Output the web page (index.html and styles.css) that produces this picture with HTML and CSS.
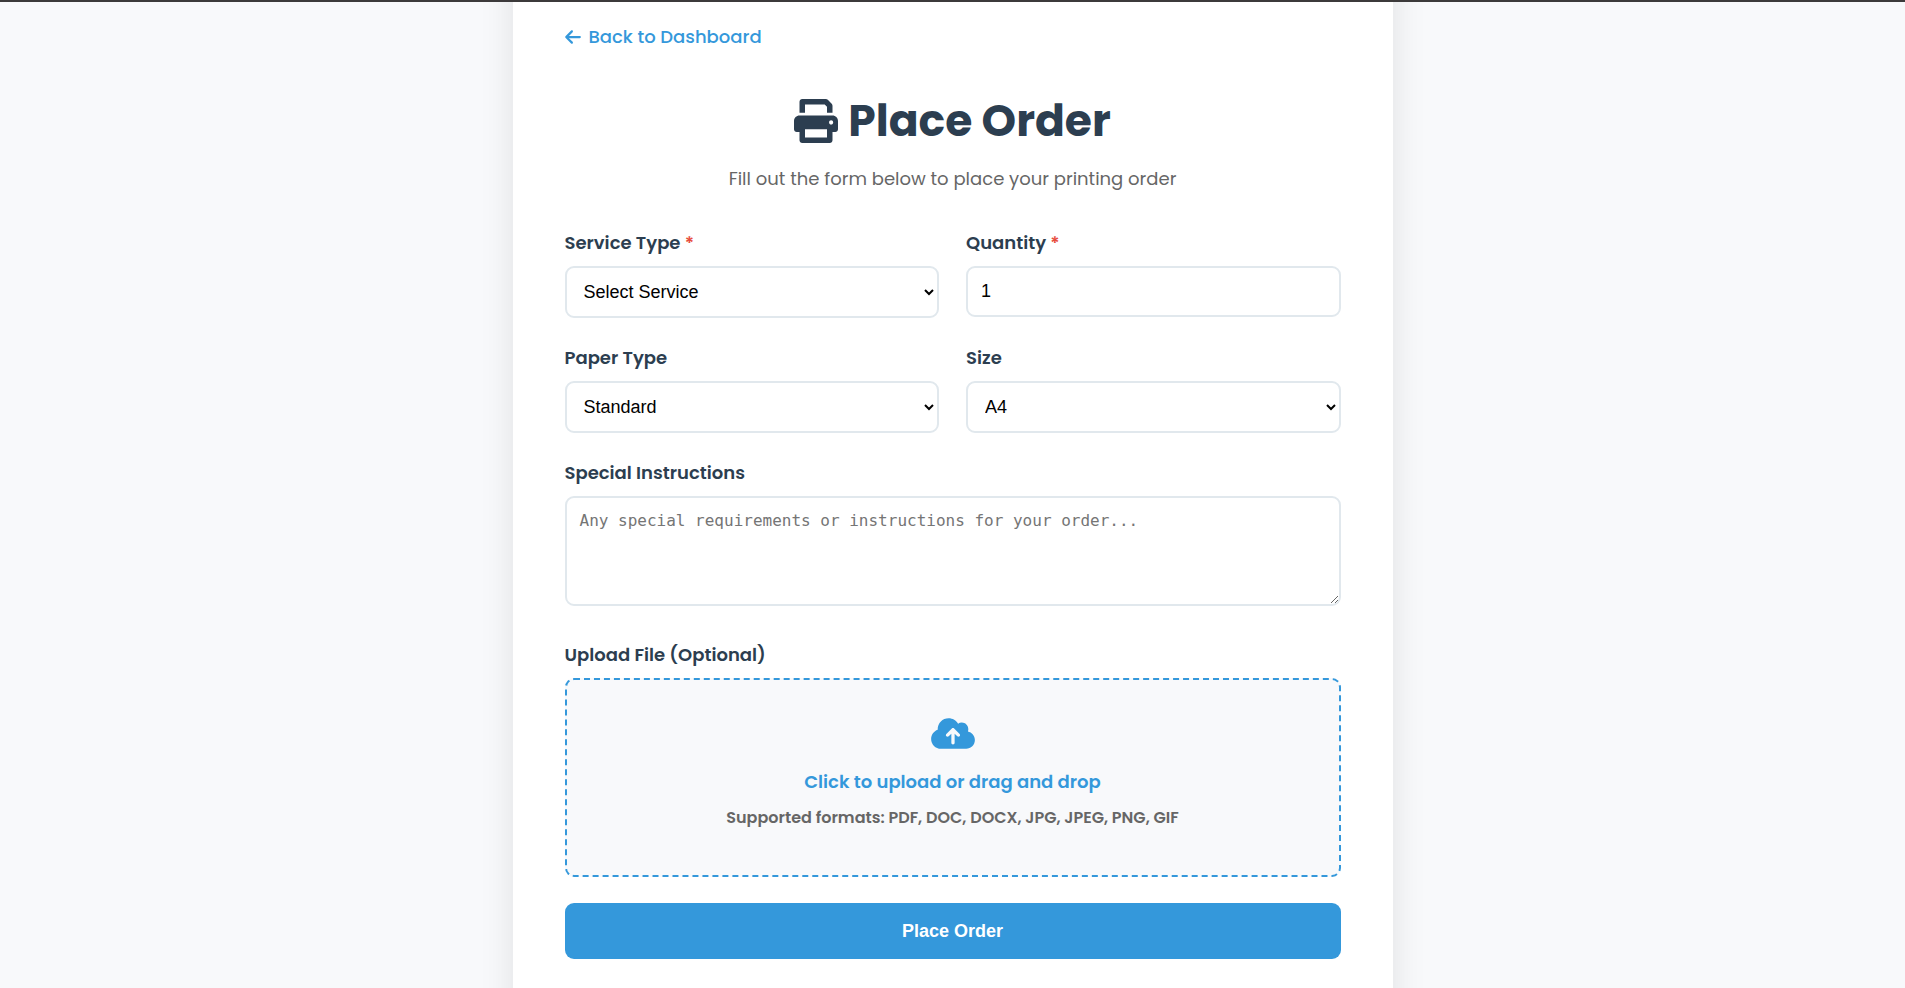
FILE: index.html
```html
<!DOCTYPE html>
<html lang="en">
<head>
    <meta charset="UTF-8">
    <meta name="viewport" content="width=device-width, initial-scale=1.0">
    <title>Place Order</title>
    <link rel="stylesheet" href="styles.css">
</head>
<body>

<main class="container">
    <a href="#" class="back-link">
        <svg class="icon-back" viewBox="0 0 448 512" aria-hidden="true"><path d="M9.4 233.4c-12.5 12.5-12.5 32.8 0 45.3l160 160c12.5 12.5 32.8 12.5 45.3 0s12.5-32.8 0-45.3L109.2 288 416 288c17.7 0 32-14.3 32-32s-14.3-32-32-32l-306.7 0L214.6 118.6c12.5-12.5 12.5-32.8 0-45.3s-32.8-12.5-45.3 0l-160 160z"/></svg>
        Back to Dashboard
    </a>

    <div class="header">
        <h1>
            <svg class="icon-print" viewBox="0 0 512 512" aria-hidden="true"><path d="M448 192H64C28.65 192 0 220.7 0 256v96c0 17.67 14.33 32 32 32h32v96c0 17.67 14.33 32 32 32h320c17.67 0 32-14.33 32-32v-96h32c17.67 0 32-14.33 32-32V256C512 220.7 483.3 192 448 192zM384 448H128v-96h256V448zM432 296c-13.25 0-24-10.75-24-24c0-13.27 10.75-24 24-24S456 258.7 456 272C456 285.3 445.3 296 432 296zM128 64h229.5L384 90.51V160h64V77.25c0-8.484-3.375-16.62-9.375-22.62l-45.25-45.25C387.4 3.371 379.2 0 370.8 0H96C78.34 0 64 14.33 64 32v128h64V64z"/></svg>
            Place Order
        </h1>
        <p>Fill out the form below to place your printing order</p>
    </div>

    <form id="orderForm" method="post" enctype="multipart/form-data">
        <div class="form-row">
            <div class="form-group">
                <label for="service">Service Type <span class="required">*</span></label>
                <select id="service" name="service" required>
                    <option value="">Select Service</option>
                </select>
            </div>
            <div class="form-group">
                <label for="quantity">Quantity <span class="required">*</span></label>
                <input type="number" id="quantity" name="quantity" min="1" value="1" required>
            </div>
        </div>

        <div class="form-row">
            <div class="form-group">
                <label for="paper">Paper Type</label>
                <select id="paper" name="paper">
                    <option value="standard">Standard</option>
                </select>
            </div>
            <div class="form-group">
                <label for="size">Size</label>
                <select id="size" name="size">
                    <option value="A4">A4</option>
                </select>
            </div>
        </div>

        <div class="form-group instructions">
            <label for="instructions">Special Instructions</label>
            <textarea id="instructions" name="instructions" placeholder="Any special requirements or instructions for your order..."></textarea>
        </div>

        <div class="form-group">
            <label for="file">Upload File (Optional)</label>
            <label for="file" class="upload-area">
                <svg class="icon-cloud" viewBox="0 0 640 512" aria-hidden="true"><path d="M144 480C64.5 480 0 415.5 0 336c0-62.8 40.2-116.2 96.2-135.9c-.1-2.7-.2-5.4-.2-8.1c0-88.4 71.6-160 160-160c59.3 0 111 32.2 138.7 80.2C409.9 102 428.3 96 448 96c53 0 96 43 96 96c0 12.2-2.3 23.8-6.4 34.6C596 238.4 640 290.1 640 352c0 70.7-57.3 128-128 128H144zm79-217c-9.4 9.4-9.4 24.6 0 33.9s24.6 9.4 33.9 0l39-39V392c0 13.3 10.7 24 24 24s24-10.7 24-24V257.9l39 39c9.4 9.4 24.6 9.4 33.9 0s9.4-24.6 0-33.9l-80-80c-9.4-9.4-24.6-9.4-33.9 0l-80 80z"/></svg>
                <span class="upload-text">Click to upload or drag and drop</span>
                <span class="upload-hint">Supported formats: PDF, DOC, DOCX, JPG, JPEG, PNG, GIF</span>
            </label>
            <input type="file" id="file" name="file" class="file-input" accept=".pdf,.doc,.docx,.jpg,.jpeg,.png,.gif">
        </div>

        <button type="submit" class="submit-btn">Place Order</button>
    </form>
</main>

</body>
</html>
```
FILE: styles.css
```css
* {
    box-sizing: border-box;
}
body {
    margin: 0;
    height: 100vh;
    border-top: 2px solid #3c3a3b;
    background-color: #f8f9fb;
    font-family: Poppins, Inter, sans-serif;
    font-size: 18px;
    line-height: 27px;
    color: #2c3e50;
    overflow: hidden;
}
main.container {
    max-width: 880px;
    margin: -40px auto;
    padding: 61px 52px 80px;
    background-color: #fff;
    box-shadow: 0 0 32px rgba(0, 0, 0, 0.1);
}
svg {
    fill: currentColor;
}

/* header */
.back-link {
    display: inline-flex;
    align-items: center;
    gap: 8px;
    margin-bottom: 38px;
    color: #3498db;
    font-weight: 500;
    text-decoration: none;
}
.icon-back {
    width: 16px;
    height: 18px;
}
.header {
    margin-bottom: 37px;
    text-align: center;
}
.header h1 {
    display: flex;
    justify-content: center;
    align-items: center;
    gap: 10px;
    margin: 0 0 11px;
    font-size: 44px;
    line-height: 66px;
    font-weight: 700;
}
.icon-print {
    width: 44px;
    height: 44px;
}
.header p {
    margin: 0;
    color: #666;
}

/* form */
.form-row {
    display: grid;
    grid-template-columns: 1fr 1fr;
    gap: 27px;
}
.form-group {
    margin-bottom: 26px;
}
.instructions {
    margin-bottom: 35px;
}
label {
    display: block;
    margin-bottom: 10px;
    font-weight: 600;
}
.required {
    color: #e74c3c;
}
input,
select,
textarea {
    display: block;
    width: 100%;
    padding: 13px;
    border: 2px solid #e1e8ed;
    border-radius: 9px;
    background-color: #fff;
    color: #000;
    font-family: "Liberation Sans", Arial, sans-serif;
    font-size: 18px;
}
select {
    height: 52px;
}
input {
    height: 51px;
}
textarea {
    height: 110px;
    font-family: "DejaVu Sans Mono", monospace;
    font-size: 16px;
    resize: vertical;
}
textarea::placeholder {
    color: #757575;
}
.upload-area {
    display: flex;
    flex-direction: column;
    align-items: center;
    margin: 0;
    padding: 36px 20px 45px;
    border: 2px dashed #3498db;
    border-radius: 9px;
    background-color: #f8f9fb;
    text-align: center;
    cursor: pointer;
}
.icon-cloud {
    width: 44px;
    height: 35px;
    margin-bottom: 17px;
    color: #3498db;
}
.upload-text {
    margin-bottom: 11px;
    color: #3498db;
}
.upload-hint {
    color: #666;
    font-size: 16px;
    line-height: 24px;
}
.file-input {
    display: none;
}
.submit-btn {
    display: block;
    width: 100%;
    height: 56px;
    border: none;
    border-radius: 9px;
    background-color: #3498db;
    color: #fff;
    font-family: "Liberation Sans", Arial, sans-serif;
    font-size: 18px;
    font-weight: 700;
    cursor: pointer;
}
.submit-btn:hover {
    background-color: #2980b9;
}
```
